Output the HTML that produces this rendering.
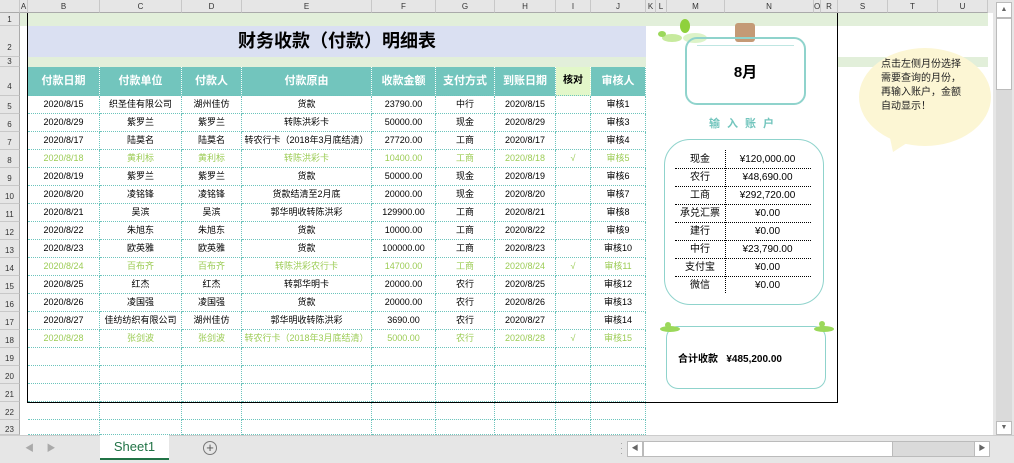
<!DOCTYPE html>
<html><head><meta charset="utf-8"><style>
*{margin:0;padding:0;box-sizing:border-box}
body{width:1014px;height:463px;overflow:hidden;background:#fff;font-family:"Liberation Sans","Noto Sans CJK SC",sans-serif;position:relative;font-size:9px;color:#000}
.a{position:absolute}
.ch{position:absolute;top:0;height:13px;background:#e6e6e6;border-right:1px solid #c8c8c8;border-bottom:1px solid #aaa;font-size:8px;text-align:center;line-height:13px;color:#333}
.rh{position:absolute;left:0;width:20px;background:#e6e6e6;border-bottom:1px solid #c8c8c8;border-right:1px solid #aaa;font-size:8px;text-align:center;color:#333}
.c{position:absolute;text-align:center;white-space:nowrap;overflow:hidden;border-right:1px dotted #6cc4bc;border-bottom:1px dotted #6cc4bc;line-height:17px}
.g{color:#9ccc55}
.h{color:#fff;font-weight:bold;font-size:11px;line-height:28px;background:#72c5bd;border-right:1px dotted #fff}
</style></head><body>
<div class="ch" style="left:0;width:20px"></div>
<div class="ch" style="left:20px;width:8px">A</div>
<div class="ch" style="left:28px;width:72px">B</div>
<div class="ch" style="left:100px;width:82px">C</div>
<div class="ch" style="left:182px;width:60px">D</div>
<div class="ch" style="left:242px;width:130px">E</div>
<div class="ch" style="left:372px;width:64px">F</div>
<div class="ch" style="left:436px;width:59px">G</div>
<div class="ch" style="left:495px;width:61px">H</div>
<div class="ch" style="left:556px;width:35px">I</div>
<div class="ch" style="left:591px;width:55px">J</div>
<div class="ch" style="left:646px;width:10px">K</div>
<div class="ch" style="left:656px;width:11px">L</div>
<div class="ch" style="left:667px;width:58px">M</div>
<div class="ch" style="left:725px;width:89px">N</div>
<div class="ch" style="left:814px;width:7px">O</div>
<div class="ch" style="left:821px;width:17px">R</div>
<div class="ch" style="left:838px;width:50px">S</div>
<div class="ch" style="left:888px;width:50px">T</div>
<div class="ch" style="left:938px;width:50px">U</div>
<div class="ch" style="left:988px;width:7px;border:none"></div>
<div class="rh" style="top:13px;height:13px;line-height:13px">1</div>
<div class="rh" style="top:26px;height:31px;line-height:44px">2</div>
<div class="rh" style="top:57px;height:10px;line-height:10px">3</div>
<div class="rh" style="top:67px;height:29px;line-height:40px">4</div>
<div class="rh" style="top:96px;height:18px;line-height:22px">5</div>
<div class="rh" style="top:114px;height:18px;line-height:22px">6</div>
<div class="rh" style="top:132px;height:18px;line-height:22px">7</div>
<div class="rh" style="top:150px;height:18px;line-height:22px">8</div>
<div class="rh" style="top:168px;height:18px;line-height:22px">9</div>
<div class="rh" style="top:186px;height:18px;line-height:22px">10</div>
<div class="rh" style="top:204px;height:18px;line-height:22px">11</div>
<div class="rh" style="top:222px;height:18px;line-height:22px">12</div>
<div class="rh" style="top:240px;height:18px;line-height:22px">13</div>
<div class="rh" style="top:258px;height:18px;line-height:22px">14</div>
<div class="rh" style="top:276px;height:18px;line-height:22px">15</div>
<div class="rh" style="top:294px;height:18px;line-height:22px">16</div>
<div class="rh" style="top:312px;height:18px;line-height:22px">17</div>
<div class="rh" style="top:330px;height:18px;line-height:22px">18</div>
<div class="rh" style="top:348px;height:18px;line-height:22px">19</div>
<div class="rh" style="top:366px;height:18px;line-height:22px">20</div>
<div class="rh" style="top:384px;height:18px;line-height:22px">21</div>
<div class="rh" style="top:402px;height:18px;line-height:22px">22</div>
<div class="rh" style="top:420px;height:15px;line-height:20px">23</div>
<div class="a" style="left:20px;top:13px;width:968px;height:13px;background:#e2efda"></div>
<div class="a" style="left:28px;top:26px;width:618px;height:31px;background:#dae0f2;font-size:18px;font-weight:bold;text-align:center;line-height:31px">财务收款（付款）明细表</div>
<div class="a" style="left:28px;top:57px;width:618px;height:10px;background:#e2efda"></div>
<div class="a" style="left:838px;top:57px;width:150px;height:10px;background:#e2efda"></div>
<div id="grid"></div>
<script>
var xs=[28,100,182,242,372,436,495,556,591,646];
var hd=["付款日期","付款单位","付款人","付款原由","收款金额","支付方式","到账日期","核对","审核人"];
var rows=[
["2020/8/15","织圣佳有限公司","湖州佳仿","货款","23790.00","中行","2020/8/15","","审核1"],
["2020/8/29","紫罗兰","紫罗兰","转陈洪彩卡","50000.00","现金","2020/8/29","","审核3"],
["2020/8/17","陆莫名","陆莫名","转农行卡（2018年3月底结清）","27720.00","工商","2020/8/17","","审核4"],
["2020/8/18","黄利标","黄利标","转陈洪彩卡","10400.00","工商","2020/8/18","√","审核5",1],
["2020/8/19","紫罗兰","紫罗兰","货款","50000.00","现金","2020/8/19","","审核6"],
["2020/8/20","凌铭锋","凌铭锋","货款结清至2月底","20000.00","现金","2020/8/20","","审核7"],
["2020/8/21","吴滨","吴滨","郭华明收转陈洪彩","129900.00","工商","2020/8/21","","审核8"],
["2020/8/22","朱旭东","朱旭东","货款","10000.00","工商","2020/8/22","","审核9"],
["2020/8/23","欧英雅","欧英雅","货款","100000.00","工商","2020/8/23","","审核10"],
["2020/8/24","百布齐","百布齐","转陈洪彩农行卡","14700.00","工商","2020/8/24","√","审核11",1],
["2020/8/25","红杰","红杰","转郭华明卡","20000.00","农行","2020/8/25","","审核12"],
["2020/8/26","凌国强","凌国强","货款","20000.00","农行","2020/8/26","","审核13"],
["2020/8/27","佳纺纺织有限公司","湖州佳仿","郭华明收转陈洪彩","3690.00","农行","2020/8/27","","审核14"],
["2020/8/28","张剑波","张剑波","转农行卡（2018年3月底结清）","5000.00","农行","2020/8/28","√","审核15",1],
["","","","","","","","",""],["","","","","","","","",""],["","","","","","","","",""],["","","","","","","","",""],["","","","","","","","",""]];
var h="";
for(var i=0;i<9;i++){var st=i==7?"background:#e2f7c9;color:#000;font-size:10px":"";
h+='<div class="c h" style="left:'+xs[i]+'px;top:67px;width:'+(xs[i+1]-xs[i])+'px;height:29px;'+st+'">'+hd[i]+'</div>';}
for(var r=0;r<rows.length;r++){var y=96+r*18;var hh=r==rows.length-1?15:18;
for(var i=0;i<9;i++){h+='<div class="c'+(rows[r][9]?' g':'')+'" style="left:'+xs[i]+'px;top:'+y+'px;width:'+(xs[i+1]-xs[i])+'px;height:'+hh+'px">'+rows[r][i]+'</div>';}}
document.getElementById('grid').innerHTML=h;
</script>
<div class="a" style="left:27px;top:26px;width:811px;height:377px;border:1px solid #000;border-top:none"></div>
<div class="a" style="left:27px;top:13px;width:1px;height:13px;background:#000"></div>
<div class="a" style="left:837px;top:13px;width:1px;height:13px;background:#000"></div>
<svg class="a" style="left:650px;top:14px" width="60" height="36"><ellipse cx="35" cy="12" rx="5" ry="7" fill="#8fd13c"/><ellipse cx="22" cy="24" rx="10" ry="4" fill="#b9e586" opacity=".8"/><ellipse cx="12" cy="20" rx="4" ry="3" fill="#9bd85a"/><ellipse cx="45" cy="24" rx="12" ry="5" fill="#cdeeb0" opacity=".7"/></svg>
<div class="a" style="left:735px;top:23px;width:20px;height:19px;background:#c49a76;border-radius:3px"></div>
<div class="a" style="left:685px;top:37px;width:121px;height:68px;border:2px solid #8fd3cc;border-radius:12px;font-size:15px;font-weight:bold;text-align:center;line-height:68px">8月</div>
<div class="a" style="left:697px;top:45px;width:97px;height:1px;background:#bfe6e2"></div>
<div class="a" style="left:665px;top:115px;width:160px;text-align:center;color:#72c5bd;font-weight:bold;font-size:11px;letter-spacing:7px">输入账户</div>
<div class="a" style="left:664px;top:139px;width:160px;height:166px;border:1.5px solid #8fd3cc;border-radius:26px"></div>
<div class="a" style="left:725px;top:150px;width:0;height:143px;border-left:1px dotted #000"></div>
<div id="acc"></div>
<script>
var ac=[["现金","¥120,000.00"],["农行","¥48,690.00"],["工商","¥292,720.00"],["承兑汇票","¥0.00"],["建行","¥0.00"],["中行","¥23,790.00"],["支付宝","¥0.00"],["微信","¥0.00"]];
var s="";for(var i=0;i<ac.length;i++){var y=151+i*18;
s+='<div class="a" style="left:675px;top:'+y+'px;width:50px;text-align:center;font-size:10px;line-height:18px">'+ac[i][0]+'</div>';
s+='<div class="a" style="left:725px;top:'+y+'px;width:85px;text-align:center;font-size:10px;line-height:18px">'+ac[i][1]+'</div>';
if(i<7)s+='<div class="a" style="left:675px;top:'+(y+17)+'px;width:136px;border-top:1px dotted #000"></div>';}
document.getElementById('acc').innerHTML=s;
</script>
<div class="a" style="left:666px;top:326px;width:160px;height:63px;border:1.5px solid #8fd3cc;border-radius:12px"></div>
<svg class="a" style="left:656px;top:320px" width="180" height="16"><ellipse cx="14" cy="9" rx="10" ry="3" fill="#9bd85a"/><circle cx="12" cy="5" r="3" fill="#9bd85a"/><ellipse cx="168" cy="9" rx="10" ry="3" fill="#9bd85a"/><circle cx="166" cy="4" r="3" fill="#9bd85a"/></svg>
<div class="a" style="left:678px;top:350px;font-size:10px;font-weight:bold;white-space:nowrap">合计收款&nbsp;&nbsp;&nbsp;¥485,200.00</div>
<svg class="a" style="left:855px;top:40px" width="140" height="115"><path d="M35 98 L38 112 L58 99 Z" fill="#fcf6d4"/><ellipse cx="70" cy="57" rx="66" ry="49" fill="#fcf6d4"/></svg>
<div class="a" style="left:881px;top:58px;font-size:10px;line-height:14px;width:85px;color:#222">点击左侧月份选择需要查询的月份，再输入账户，金额自动显示！</div>
<div class="a" style="left:993px;top:0;width:21px;height:435px;background:#e6e6e6"></div>
<div class="a" style="left:996px;top:2px;width:16px;height:16px;background:#fff;border:1px solid #bbb;font-size:7px;text-align:center;line-height:14px;color:#666">▲</div>
<div class="a" style="left:996px;top:18px;width:16px;height:72px;background:#fff;border:1px solid #bbb"></div>
<div class="a" style="left:996px;top:90px;width:16px;height:331px;background:#dadada"></div>
<div class="a" style="left:996px;top:421px;width:16px;height:14px;background:#fff;border:1px solid #bbb;font-size:7px;text-align:center;line-height:12px;color:#666">▼</div>
<div class="a" style="left:0;top:435px;width:1014px;height:28px;background:#e6e6e6;border-top:1px solid #ccc"></div>
<div class="a" style="left:25px;top:441px;font-size:9px;color:#aaa">◀&nbsp;&nbsp;&nbsp;&nbsp;&nbsp;▶</div>
<div class="a" style="left:100px;top:435px;width:69px;height:25px;background:#fff;border-bottom:2px solid #217346;color:#217346;font-size:13px;text-align:center;line-height:24px">Sheet1</div>
<div class="a" style="left:203px;top:441px;width:14px;height:14px;border:1px solid #777;border-radius:50%;text-align:center;line-height:11px;font-size:13px;color:#555">+</div>
<div class="a" style="left:620px;top:441px;font-size:9px;color:#999;line-height:5px">·<br>·<br>·</div>
<div class="a" style="left:627px;top:441px;width:363px;height:16px;background:#dadada;border:1px solid #bbb"></div>
<div class="a" style="left:627px;top:441px;width:16px;height:16px;background:#fff;border:1px solid #bbb;font-size:7px;line-height:14px;text-align:center;color:#666">◀</div>
<div class="a" style="left:643px;top:441px;width:250px;height:16px;background:#fff;border:1px solid #bbb"></div>
<div class="a" style="left:974px;top:441px;width:16px;height:16px;background:#fff;border:1px solid #bbb;font-size:7px;line-height:14px;text-align:center;color:#666">▶</div>
</body></html>
